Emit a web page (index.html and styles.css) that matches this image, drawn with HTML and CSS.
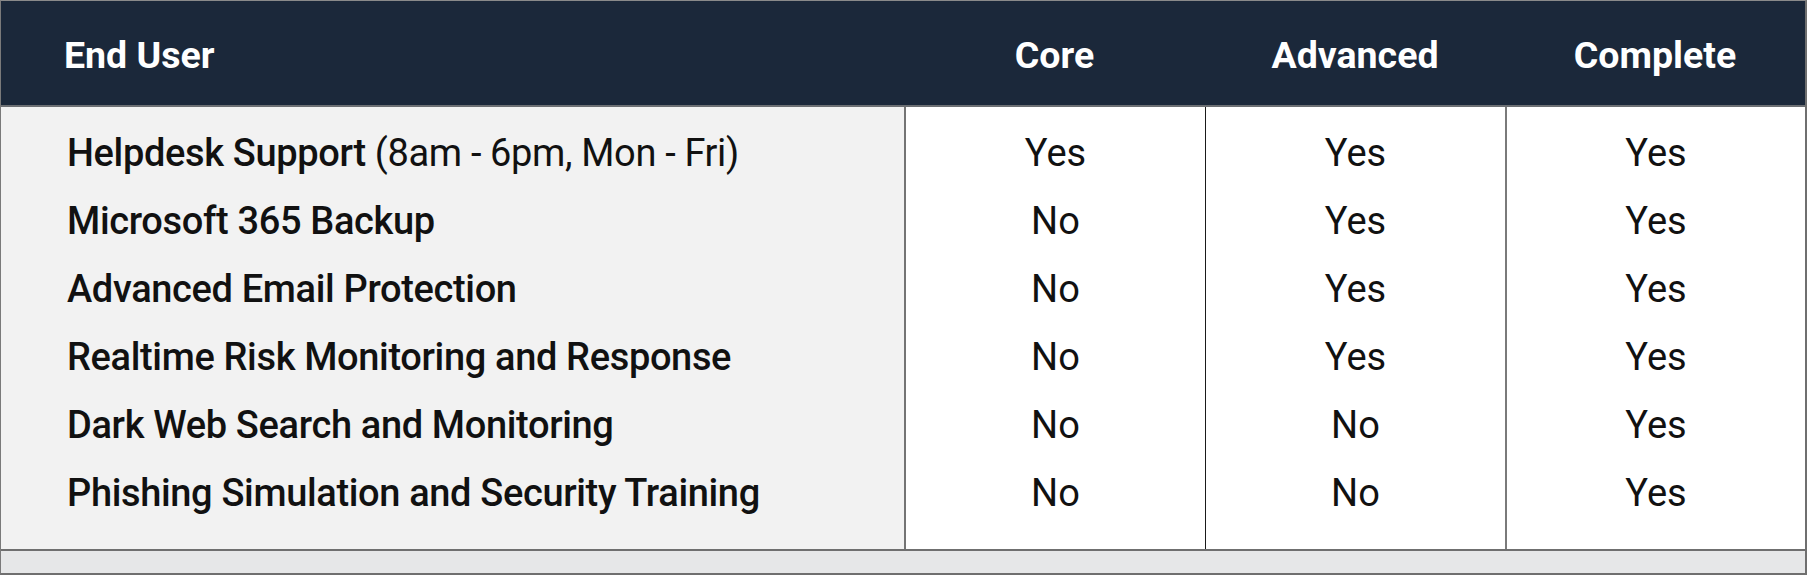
FILE: index.html
```html
<!DOCTYPE html>
<html lang="en">
<head>
<meta charset="utf-8">
<title>End User Plans</title>
<link rel="stylesheet" href="styles.css">
</head>
<body>
<div class="plans">
  <div class="head">
    <div class="hcell label">End User</div>
    <div class="hcell">Core</div>
    <div class="hcell">Advanced</div>
    <div class="hcell">Complete</div>
  </div>
  <div class="body">
    <div class="cell label first"><span class="feat">Helpdesk Support</span>&nbsp;(8am - 6pm, Mon - Fri)</div>
    <div class="cell c2 first">Yes</div>
    <div class="cell c3 first">Yes</div>
    <div class="cell c4 first">Yes</div>

    <div class="cell label"><span class="feat">Microsoft 365 Backup</span></div>
    <div class="cell c2">No</div>
    <div class="cell c3">Yes</div>
    <div class="cell c4">Yes</div>

    <div class="cell label"><span class="feat">Advanced Email Protection</span></div>
    <div class="cell c2">No</div>
    <div class="cell c3">Yes</div>
    <div class="cell c4">Yes</div>

    <div class="cell label"><span class="feat">Realtime Risk Monitoring and Response</span></div>
    <div class="cell c2">No</div>
    <div class="cell c3">Yes</div>
    <div class="cell c4">Yes</div>

    <div class="cell label"><span class="feat">Dark Web Search and Monitoring</span></div>
    <div class="cell c2">No</div>
    <div class="cell c3">No</div>
    <div class="cell c4">Yes</div>

    <div class="cell label last"><span class="feat">Phishing Simulation and Security Training</span></div>
    <div class="cell c2 last">No</div>
    <div class="cell c3 last">No</div>
    <div class="cell c4 last">Yes</div>
  </div>
  <div class="foot"></div>
</div>
</body>
</html>
```

FILE: styles.css
```css
html, body {
  margin: 0;
  padding: 0;
  background: #ffffff;
}

body {
  font-family: Roboto, "Liberation Sans", sans-serif;
  color: #111111;
}

.plans {
  width: 1807px;
  height: 575px;
  box-sizing: border-box;
  border-top: 1px solid #8a8a8a;
  border-left: 1px solid #7a7a7a;
  border-right: 2px solid #6f6f6f;
  border-bottom: 2px solid #6f6f6f;
  display: flex;
  flex-direction: column;
}

.head {
  height: 104px;
  background: #1b283a;
  border-bottom: 2px solid #6c6f73;
  display: grid;
  grid-template-columns: 903px 301px 300px 300px;
  align-items: center;
  color: #ffffff;
  font-weight: 700;
  font-size: 37.5px;
  line-height: 1;
}

.hcell {
  text-align: center;
  padding-top: 6px;
}

.hcell.label {
  text-align: left;
  padding-left: 63px;
}

.body {
  height: 442px;
  display: grid;
  grid-template-columns: 903px 301px 300px 300px;
  grid-auto-rows: auto;
  font-size: 38px;
  line-height: 68px;
}

.cell {
  text-align: center;
  background: #ffffff;
  white-space: nowrap;
}

.cell.label {
  text-align: left;
  background: #f2f2f2;
  padding-left: 66px;
  letter-spacing: -0.35px;
}

.feat {
  font-weight: 500;
}

.c2 {
  border-left: 2px solid #747474;
}

.c3 {
  border-left: 1px solid #1a1a1a;
}

.c4 {
  border-left: 2px solid #7a7a7a;
}

.cell.first {
  padding-top: 12px;
}

.cell.last {
  padding-bottom: 22px;
}

.foot {
  height: 22px;
  background: #e6e7e8;
  border-top: 2px solid #6f6f6f;
}
```
